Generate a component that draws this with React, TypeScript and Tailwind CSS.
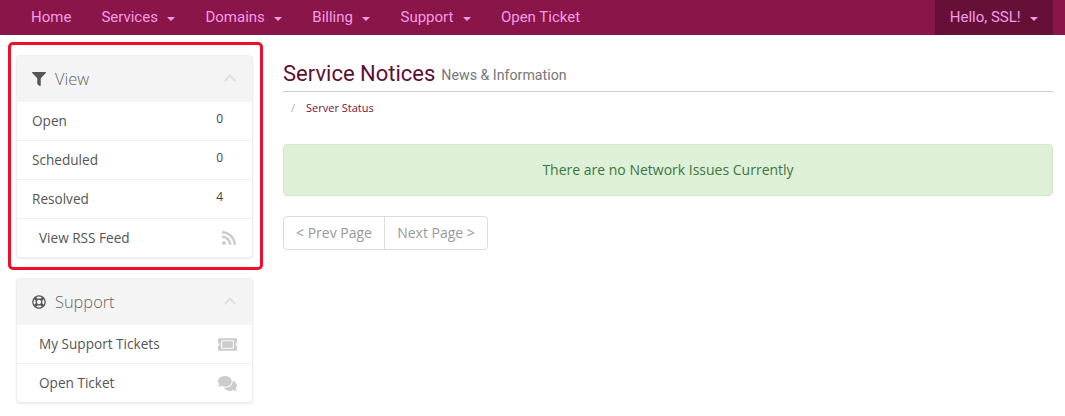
import { type JSX, type ReactNode } from "react";
import { FaChevronUp, FaComments, FaFilter, FaRegLifeRing, FaRss, FaTicketAlt } from "react-icons/fa";

const navItems = [
  { label: "Home", caret: false },
  { label: "Services", caret: true },
  { label: "Domains", caret: true },
  { label: "Billing", caret: true },
  { label: "Support", caret: true },
  { label: "Open Ticket", caret: false },
];

function Caret(): JSX.Element {
  return <span className="ml-[9.5px] mt-[3px] h-0 w-0 border-x-[4px] border-t-[4px] border-x-transparent border-t-[#f49be8]" />;
}

function Panel({ icon, title, children }: { icon: ReactNode; title: string; children: ReactNode }): JSX.Element {
  return (
    <div className="w-[237px] overflow-hidden rounded-[4px] border border-[#eeeeee] bg-white shadow-[0_1px_2px_rgba(0,0,0,0.08)]">
      <div className="flex h-[46px] items-center bg-[#f4f4f4] pl-[15px] pr-[15px] text-[#555555]">
        <span className="flex w-[16px] justify-start">{icon}</span>
        <span className="ml-[7px] text-[16.4px] font-light text-[#666666]">{title}</span>
        <FaChevronUp className="ml-auto mb-[2px] text-[14px] text-[#e0e0e0]" />
      </div>
      {children}
    </div>
  );
}

function CountRow({ label, count }: { label: string; count: number }): JSX.Element {
  return (
    <div className="flex h-[39px] items-center justify-between border-b border-[#f0f0f0] pl-[15px] pr-[29px] text-[13.6px] text-[#555555]">
      <span>{label}</span>
      <span className="mb-[4px] text-[12px] text-[#444444]">{count}</span>
    </div>
  );
}

function LinkRow({ label, icon, last }: { label: string; icon: ReactNode; last?: boolean }): JSX.Element {
  return (
    <div className={`flex items-center justify-between pl-[22px] pr-[15px] text-[13.6px] text-[#555555] ${last ? "h-[38px]" : "h-[39px] border-b border-[#f0f0f0]"}`}>
      <span>{label}</span>
      <span className="text-[#cccccc]">{icon}</span>
    </div>
  );
}

export default function App(): JSX.Element {
  return (
    <div className="h-[416px] w-[1065px] overflow-hidden bg-white font-['Open_Sans',sans-serif]">
      <nav className="flex h-[35px] items-stretch bg-[#8a1549] pb-[1px] pl-[16px] pr-[12px] font-['Roboto',sans-serif] text-[15px] text-[#f49be8]">
        {navItems.map((item) => (
          <div key={item.label} className="flex items-center px-[15px]">
            {item.label}
            {item.caret && <Caret />}
          </div>
        ))}
        <div className="-mb-[1px] ml-auto flex w-[118px] items-center justify-center bg-[#661038] pb-[1px]">
          Hello, SSL!
          <Caret />
        </div>
      </nav>

      <div className="flex">
        <aside className="ml-[8px] mt-[7px] flex w-[255px] flex-col">
          <div className="rounded-[5px] border-[3px] border-[#ee0f2c] pb-[9px] pl-[5px] pt-[10px]">
            <Panel icon={<FaFilter className="text-[14px]" />} title="View">
              <CountRow label="Open" count={0} />
              <CountRow label="Scheduled" count={0} />
              <CountRow label="Resolved" count={4} />
              <LinkRow label="View RSS Feed" icon={<FaRss className="text-[16px]" />} last />
            </Panel>
          </div>
          <div className="ml-[8px] mt-[8px]">
            <Panel icon={<FaRegLifeRing className="text-[14px]" />} title="Support">
              <LinkRow label="My Support Tickets" icon={<FaTicketAlt className="text-[19px]" />} />
              <LinkRow label="Open Ticket" icon={<FaComments className="text-[19px]" />} last />
            </Panel>
          </div>
        </aside>

        <main className="ml-[20px] w-[770px]">
          <div className="mt-[22px] flex h-[35px] items-baseline gap-[6px] border-b border-[#cccccc] font-['Roboto',sans-serif]">
            <h1 className="text-[22px] leading-[34px] text-[#5e1034]">Service Notices</h1>
            <span className="-translate-y-px text-[14.2px] text-[#777777]">News &amp; Information</span>
          </div>
          <div className="mt-[8px] flex items-center pl-[8px] text-[11px] leading-[15px]">
            <span className="text-[#aaaaaa]">/</span>
            <span className="ml-[11px] text-[#7a1240]">Server Status</span>
          </div>
          <div className="mt-[29px] flex h-[52px] items-center justify-center rounded-[4px] border border-[#d6e9c6] bg-[#dff0d8] pb-[2px] text-[14px] text-[#3c763d]">
            There are no Network Issues Currently
          </div>
          <div className="mt-[20px] flex h-[34px] w-fit rounded-[4px] border border-[#dddddd] text-[14px] text-[#999999]">
            <span className="flex w-[101px] items-center justify-center border-r border-[#dddddd] pb-[1px]">&lt; Prev Page</span>
            <span className="flex w-[102px] items-center justify-center pb-[1px]">Next Page &gt;</span>
          </div>
        </main>
      </div>
    </div>
  );
}
